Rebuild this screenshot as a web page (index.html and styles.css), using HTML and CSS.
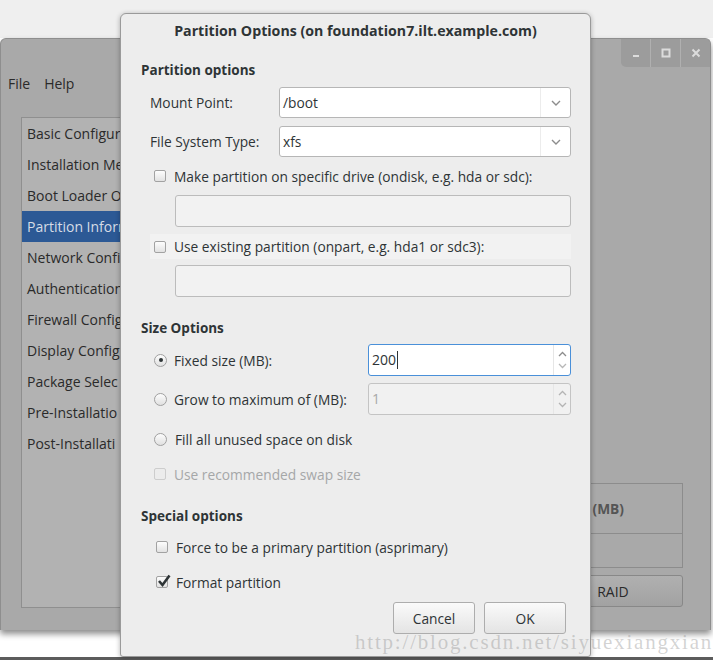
FILE: index.html
```html
<!DOCTYPE html>
<html lang="en">
<head>
    <meta charset="UTF-8">
    <title>Partition Options</title>
    <link rel="stylesheet" href="styles.css">
</head>
<body>
    <div class="desktop">
        <div class="app-window">
            <div class="app-header">
                <div class="wm-buttons">
                    <div class="wm-btn">
                        <svg width="10" height="10" viewBox="0 0 10 10"><rect x="2" y="7" width="6" height="2" fill="#dcdcdc"/></svg>
                    </div>
                    <div class="wm-btn">
                        <svg width="10" height="10" viewBox="0 0 10 10"><rect x="1.5" y="1.5" width="7" height="7" fill="none" stroke="#dcdcdc" stroke-width="2"/></svg>
                    </div>
                    <div class="wm-btn">
                        <svg width="10" height="10" viewBox="0 0 10 10"><path d="M1.5 1.5 L8.5 8.5 M8.5 1.5 L1.5 8.5" stroke="#dcdcdc" stroke-width="2"/></svg>
                    </div>
                </div>
            </div>
            <div class="menubar">
                <span>File</span>
                <span>Help</span>
            </div>
            <div class="app-body">
                <ul class="sidebar">
                    <li>Basic Configur</li>
                    <li>Installation Me</li>
                    <li>Boot Loader O</li>
                    <li class="selected">Partition Inforn</li>
                    <li>Network Confi</li>
                    <li>Authentication</li>
                    <li>Firewall Config</li>
                    <li>Display Config</li>
                    <li>Package Selec</li>
                    <li>Pre-Installatio</li>
                    <li>Post-Installati</li>
                </ul>
                <div class="main-pane">
                    <div class="part-table">
                        <div class="part-head">(MB)</div>
                        <div class="part-rows"></div>
                    </div>
                    <button class="app-btn">RAID</button>
                </div>
            </div>
        </div>
        <div class="taskbar-edge"></div>

        <div class="dialog">
            <div class="dialog-title">Partition Options (on foundation7.ilt.example.com)</div>
            <div class="dialog-body">
                <div class="section-head first">Partition options</div>

                <div class="form-row mount">
                    <span class="form-label">Mount Point:</span>
                    <div class="combo">
                        <span class="combo-text">/boot</span>
                        <span class="combo-arrow">
                            <svg width="10" height="6" viewBox="0 0 10 6"><path d="M1 1 L5 5 L9 1" fill="none" stroke="#8c8c8c" stroke-width="1.4"/></svg>
                        </span>
                    </div>
                </div>
                <div class="form-row fstype">
                    <span class="form-label">File System Type:</span>
                    <div class="combo">
                        <span class="combo-text">xfs</span>
                        <span class="combo-arrow">
                            <svg width="10" height="6" viewBox="0 0 10 6"><path d="M1 1 L5 5 L9 1" fill="none" stroke="#8c8c8c" stroke-width="1.4"/></svg>
                        </span>
                    </div>
                </div>

                <label class="check-row ondisk">
                    <span class="checkbox"></span>
                    Make partition on specific drive (ondisk, e.g. hda or sdc):
                </label>
                <div class="entry disabled ondisk-entry"></div>

                <label class="check-row onpart">
                    <span class="checkbox"></span>
                    Use existing partition (onpart, e.g. hda1 or sdc3):
                </label>
                <div class="entry disabled onpart-entry"></div>

                <div class="section-head size-head">Size Options</div>

                <div class="radio-row fixed">
                    <label class="radio-label"><span class="radio checked"></span>Fixed size (MB):</label>
                    <div class="spin focused">
                        <span class="spin-text">200<span class="caret"></span></span>
                        <span class="spin-arrows">
                            <svg width="9" height="6" viewBox="0 0 9 6"><path d="M1 5 L4.5 1.5 L8 5" fill="none" stroke="#8c8c8c" stroke-width="1.3"/></svg>
                            <svg width="9" height="6" viewBox="0 0 9 6"><path d="M1 1 L4.5 4.5 L8 1" fill="none" stroke="#b8b8b8" stroke-width="1.3"/></svg>
                        </span>
                    </div>
                </div>
                <div class="radio-row grow">
                    <label class="radio-label"><span class="radio"></span>Grow to maximum of (MB):</label>
                    <div class="spin disabled">
                        <span class="spin-text">1</span>
                        <span class="spin-arrows">
                            <svg width="9" height="6" viewBox="0 0 9 6"><path d="M1 5 L4.5 1.5 L8 5" fill="none" stroke="#b4b4b4" stroke-width="1.3"/></svg>
                            <svg width="9" height="6" viewBox="0 0 9 6"><path d="M1 1 L4.5 4.5 L8 1" fill="none" stroke="#b4b4b4" stroke-width="1.3"/></svg>
                        </span>
                    </div>
                </div>
                <label class="check-row fill">
                    <span class="radio"></span>
                    Fill all unused space on disk
                </label>
                <label class="check-row swap is-disabled">
                    <span class="checkbox"></span>
                    Use recommended swap size
                </label>

                <div class="section-head special-head">Special options</div>

                <label class="check-row special asprimary">
                    <span class="checkbox"></span>
                    Force to be a primary partition (asprimary)
                </label>
                <label class="check-row special format">
                    <span class="checkbox checked">
                        <svg width="16" height="16" viewBox="0 0 16 16"><path d="M3 8 L6.5 12 L13.5 2.5" fill="none" stroke="#2e3436" stroke-width="2.6"/></svg>
                    </span>
                    Format partition
                </label>

                <div class="dialog-buttons">
                    <button class="btn">Cancel</button>
                    <button class="btn">OK</button>
                </div>
            </div>
        </div>

        <div class="watermark">http://blog.csdn.net/siyuexiangxian</div>
    </div>
</body>
</html>
```

FILE: styles.css
```css
body {
    margin: 0;
    font-family: "Open Sans", "DejaVu Sans", sans-serif;
    font-size: 13.75px;
    color: #2e3436;
    background-color: #ffffff;
}
.desktop {
    position: relative;
    width: 713px;
    height: 660px;
    overflow: hidden;
    display: flex;
    flex-direction: column;
    background: linear-gradient(#efefef 0, #efefef 38px, #ffffff 38px);
}

/* background window */
.app-window {
    margin-top: 38px;
    margin-right: 2px;
    height: 592px;
    background-color: #a9a9a9;
    border: 1px solid #8e8e8e;
    border-bottom: none;
    border-radius: 6px 6px 0 0;
    box-sizing: border-box;
    box-shadow: 0 4px 6px rgba(0, 0, 0, 0.45);
    display: flex;
    flex-direction: column;
}
.app-header {
    height: 28px;
    display: flex;
    justify-content: flex-end;
}
.wm-buttons {
    display: flex;
    background-color: #9c9c9c;
    border-bottom-left-radius: 5px;
    border-top-right-radius: 5px;
}
.wm-btn {
    width: 29px;
    display: flex;
    align-items: center;
    justify-content: center;
    border-left: 1px solid #b0b0b0;
}
.wm-btn:first-child {
    border-left: none;
}
.menubar {
    height: 33px;
    display: flex;
    align-items: center;
    gap: 14px;
    padding-left: 7px;
    font-size: 14px;
    color: #2a2a2a;
}
.app-body {
    flex: 1;
    display: flex;
    padding: 17px 26px 22px 20px;
}
.sidebar {
    list-style: none;
    margin: 0;
    padding: 0;
    width: 300px;
    background-color: #b2b2b2;
    border: 1px solid #8f8f8f;
    border-right: none;
    color: #2a2a2a;
    font-size: 14px;
}
.sidebar li {
    height: 31px;
    line-height: 31px;
    padding-left: 5px;
    white-space: nowrap;
}
.sidebar li.selected {
    background-color: #2c5995;
    color: #d6dce6;
}
.main-pane {
    flex: 1;
    display: flex;
    flex-direction: column;
    justify-content: flex-end;
    align-items: flex-end;
}
.part-table {
    width: 200px;
    height: 85px;
    border: 1px solid #8c8c8c;
    box-sizing: border-box;
    display: flex;
    flex-direction: column;
    margin-bottom: 7px;
    margin-right: 1px;
}
.part-head {
    height: 49px;
    line-height: 49px;
    border-bottom: 1px solid #8c8c8c;
    padding-left: 8px;
    font-weight: bold;
    color: #555555;
    text-align: right;
    padding-right: 58px;
}
.part-rows {
    flex: 1;
}
.app-btn {
    width: 140px;
    height: 32px;
    margin-bottom: 1px;
    margin-right: 1px;
    font-family: inherit;
    font-size: 14px;
    color: #2a2a2a;
    background: linear-gradient(#b0b0b0, #a2a2a2);
    border: 1px solid #888888;
    border-radius: 3px;
}
.taskbar-edge {
    margin-top: auto;
    height: 3px;
    background-color: #5c5c5c;
}

/* dialog */
.dialog {
    position: absolute;
    left: 120px;
    top: 13px;
    width: 471px;
    height: 644px;
    box-sizing: border-box;
    background-color: #ededed;
    border: 1px solid #9a9a9a;
    border-radius: 6px 6px 3px 3px;
    box-shadow: 0 1px 5px rgba(0, 0, 0, 0.3);
    display: flex;
    flex-direction: column;
}
.dialog-title {
    height: 33px;
    line-height: 33px;
    text-align: center;
    font-weight: bold;
    font-size: 14.2px;
}
.dialog-body {
    padding: 0 19px 0 20px;
    display: flex;
    flex-direction: column;
}
.section-head {
    height: 20px;
    line-height: 20px;
    font-weight: bold;
    font-size: 13.5px;
}
.section-head.first { margin-top: 13px; }
.section-head.size-head { margin-top: 21px; }
.section-head.special-head { margin-top: 22px; }

.form-row {
    display: flex;
    align-items: center;
    height: 31px;
    margin-left: 9px;
}
.form-row.mount { margin-top: 7px; }
.form-row.fstype { margin-top: 8px; }
.form-label {
    width: 129px;
    flex-shrink: 0;
}
.combo {
    flex: 1;
    height: 31px;
    box-sizing: border-box;
    display: flex;
    background-color: #ffffff;
    border: 1px solid #b6b6b6;
    border-radius: 3px;
}
.combo-text {
    flex: 1;
    line-height: 29px;
    padding-left: 3px;
}
.combo-arrow {
    width: 29px;
    display: flex;
    align-items: center;
    justify-content: center;
    border-left: 1px solid #ececec;
}

.check-row {
    display: flex;
    align-items: center;
    gap: 8px;
    height: 20px;
    padding-left: 13px;
}
.check-row.ondisk { margin-top: 9px; }
.check-row.onpart {
    margin-top: 7px;
    margin-left: 9px;
    padding-left: 4px;
    height: 25px;
    background-color: #f2f2f2;
}
.check-row.fill { margin-top: 14px; }
.check-row.swap { margin-top: 15px; }
.check-row.special { padding-left: 15px; }
.check-row.asprimary { margin-top: 11px; }
.check-row.format { margin-top: 15px; }
.check-row.is-disabled { color: #a5a7a8; }

.checkbox {
    position: relative;
    width: 12px;
    height: 12px;
    box-sizing: border-box;
    border: 1px solid #a2a2a2;
    border-radius: 2px;
    background: linear-gradient(#fdfdfd, #e2e2e2);
    flex-shrink: 0;
}
.is-disabled .checkbox {
    border-color: #cdcdcd;
    background: #ececec;
}
.checkbox.checked svg {
    position: absolute;
    left: -1px;
    top: -4px;
}
.radio {
    width: 13px;
    height: 13px;
    box-sizing: border-box;
    border: 1px solid #a0a0a0;
    border-radius: 50%;
    background: linear-gradient(#fdfdfd, #e0e0e0);
    flex-shrink: 0;
    display: flex;
    align-items: center;
    justify-content: center;
}
.radio.checked::after {
    content: "";
    width: 4px;
    height: 4px;
    border-radius: 50%;
    background-color: #2e3436;
}

.entry {
    height: 32px;
    box-sizing: border-box;
    margin-left: 34px;
    border: 1px solid #bcbcbc;
    border-radius: 3px;
    background-color: #f2f2f2;
}
.ondisk-entry { margin-top: 9px; }
.onpart-entry { margin-top: 6px; }

.radio-row {
    display: flex;
    align-items: center;
    height: 32px;
    padding-left: 13px;
}
.radio-row.fixed { margin-top: 6px; }
.radio-row.grow { margin-top: 7px; }
.radio-label {
    width: 214px;
    display: flex;
    align-items: center;
    gap: 7px;
}
.spin {
    flex: 1;
    height: 32px;
    box-sizing: border-box;
    display: flex;
    border: 1px solid #b6b6b6;
    border-radius: 3px;
    background-color: #ffffff;
}
.spin.focused {
    border-color: #4a90d9;
}
.spin.disabled {
    background-color: #f1f1f1;
    border-color: #c4c4c4;
    color: #a8a8a8;
}
.spin-text {
    flex: 1;
    line-height: 30px;
    padding-left: 3px;
    font-size: 14px;
}
.caret {
    display: inline-block;
    width: 1px;
    height: 18px;
    margin-left: 1px;
    vertical-align: -4px;
    background-color: #2e3436;
}
.spin-arrows {
    width: 16px;
    display: flex;
    flex-direction: column;
    align-items: center;
    justify-content: space-around;
    border-left: 1px solid #e6e6e6;
    padding: 3px 0;
}

.dialog-buttons {
    margin-top: 10px;
    padding-right: 5px;
    display: flex;
    justify-content: flex-end;
    gap: 9px;
}
.btn {
    width: 82px;
    height: 32px;
    font-family: inherit;
    font-size: 13.75px;
    color: #2e3436;
    background: linear-gradient(#fafafa, #e4e4e4);
    border: 1px solid #adadad;
    border-radius: 3px;
}

.watermark {
    position: absolute;
    left: 355px;
    top: 630px;
    font-family: "Liberation Serif", serif;
    font-size: 21px;
    letter-spacing: 1.8px;
    color: rgba(140, 140, 140, 0.38);
    white-space: nowrap;
    pointer-events: none;
}
```
